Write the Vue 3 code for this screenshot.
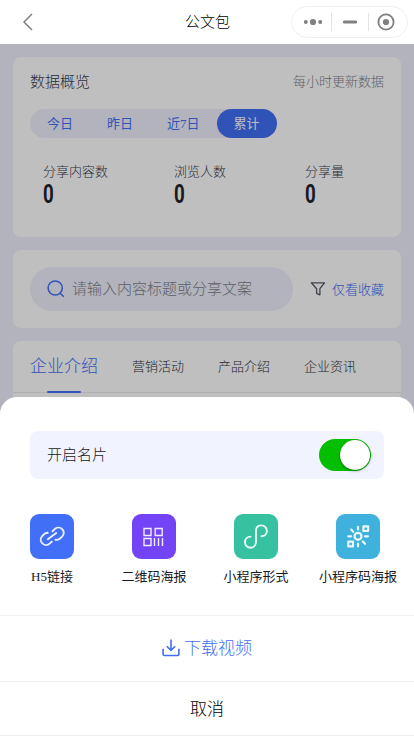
<script setup>
import { ref } from 'vue'

const periods = ['今日', '昨日', '近7日', '累计']
const period = ref('累计')
const stats = [
  { label: '分享内容数', value: 0 },
  { label: '浏览人数', value: 0 },
  { label: '分享量', value: 0 },
]
const tabs = ['企业介绍', '营销活动', '产品介绍', '企业资讯']
const tab = ref('企业介绍')
const card = ref(true)
const shares = [
  { id: 'link', label: 'H5链接' },
  { id: 'qr', label: '二维码海报' },
  { id: 'mini', label: '小程序形式' },
  { id: 'code', label: '小程序码海报' },
]
</script>

<template>
  <div class="screen">
    <header class="nav">
      <svg class="back" width="12" height="18" viewBox="0 0 12 18"><path d="M10 1 2 9l8 8" /></svg>
      <h1>公文包</h1>
      <div class="capsule">
        <svg width="20" height="8" viewBox="0 0 20 8"><circle cx="2.8" cy="4" r="2" /><circle cx="10" cy="4" r="3.1" /><circle cx="17.2" cy="4" r="2" /></svg>
        <i></i>
        <svg width="14" height="4" viewBox="0 0 14 4"><rect y=".6" width="14" height="2.8" rx="1.2" /></svg>
        <i></i>
        <svg width="18" height="18" viewBox="0 0 18 18"><circle cx="9" cy="9" r="7.6" class="ring" /><circle cx="9" cy="9" r="3.1" /></svg>
      </div>
    </header>

    <main class="page">
      <section class="card overview">
        <div class="head"><h2>数据概览</h2><span>每小时更新数据</span></div>
        <div class="periods">
          <button v-for="p in periods" :key="p" :class="{ on: p === period }" @click="period = p">{{ p }}</button>
        </div>
        <div class="stats">
          <div v-for="s in stats" :key="s.label">
            <p>{{ s.label }}</p>
            <strong>{{ s.value }}</strong>
          </div>
        </div>
      </section>

      <section class="card search">
        <div class="field">
          <svg width="18" height="18" viewBox="0 0 18 18"><circle cx="8.2" cy="8" r="7.1" /><path d="m13.2 13.2 3.6 3.6" /></svg>
          <span>请输入内容标题或分享文案</span>
        </div>
        <div class="filter">
          <svg width="16" height="16" viewBox="0 0 16 16"><path d="M1.3 1.8h13.2L9.9 7.7v6.1l-3.3-1.5V7.7z" /></svg>
          <span>仅看收藏</span>
        </div>
      </section>

      <section class="card listing">
        <nav class="tabs">
          <button v-for="t in tabs" :key="t" :class="{ on: t === tab }" @click="tab = t">{{ t }}</button>
        </nav>
      </section>
      <div class="mask"></div>
    </main>

    <section class="sheet">
      <div class="toggle-row">
        <span>开启名片</span>
        <button class="switch" :class="{ on: card }" aria-label="开启名片" @click="card = !card"><i></i></button>
      </div>
      <div class="shares">
        <div v-for="s in shares" :key="s.id" class="share">
          <div class="tile" :class="s.id">
            <svg v-if="s.id === 'link'" width="44" height="44" viewBox="0 0 44 44">
              <path d="M22.5 17.2 25 14.9a5.3 5.3 0 0 1 7.2.3 5.2 5.2 0 0 1-.1 7.4l-2.4 2.2a5.6 5.6 0 0 1-4.2 1M17.7 18.7a5.8 5.8 0 0 0-4.1 1.9l-1.4 1.5a5.2 5.2 0 0 0 .1 7.3 5.3 5.3 0 0 0 7.3.2l2.2-2M17.8 25.3l8.4-6.2" />
            </svg>
            <svg v-else-if="s.id === 'qr'" class="thin" width="44" height="44" viewBox="0 0 44 44">
              <path d="M12 14.5h7v7h-7zM23.2 14.5h7v7h-7zM12 24.5h7v7h-7zM22.5 24v8M26.5 24v8M30.5 24v8" />
            </svg>
            <svg v-else-if="s.id === 'mini'" width="44" height="44" viewBox="0 0 44 44">
              <path d="M27.4 22.3c3.2 0 5.5-2.2 5.5-5.2 0-3.3-2.4-5.7-5.6-5.7s-5.3 2.2-5.3 5.5v10.5c0 3.5-2.3 6.3-5.5 6.3S11 31.2 11 28.1s2.4-5.5 5.6-5.5" />
            </svg>
            <svg v-else class="bold" width="44" height="44" viewBox="0 0 44 44">
              <circle cx="22" cy="22.3" r="3.5" />
              <path d="M27.4 12.3h4.7V17h-4.7zM12.3 27.7H17v4.7h-4.7zM22 12.9v2.6M22 29.7v2.6M12.2 22.3h2.9M29 22.3h2.9M15.2 15.5l2 2.2M26.8 27.4l2.2 2.4" />
            </svg>
          </div>
          <span>{{ s.label }}</span>
        </div>
      </div>
      <button class="action download">
        <svg width="18" height="18" viewBox="0 0 18 18"><path d="M1.1 9.8v5.5c0 .8.4 1.2 1.2 1.2h13.4c.8 0 1.2-.4 1.2-1.2V9.8M9 .6v10.8M4.8 7.3 9 11.4l4.2-4.1" /></svg>
        <span>下载视频</span>
      </button>
      <button class="action cancel">取消</button>
    </section>
  </div>
</template>

<style>
body {
  margin: 0;
}
</style>

<style scoped>
.screen {
  position: relative;
  display: flex;
  flex-direction: column;
  height: 736px;
  overflow: hidden;
  box-sizing: border-box;
  background: #fff;
  font-family: "Liberation Serif", "Noto Sans CJK SC", sans-serif;
  font-weight: 300;
  color: #171a24;
}
.screen * { box-sizing: border-box; }
h1, h2, p { margin: 0; font-weight: inherit; }
button { margin: 0; padding: 0; border: 0; background: none; font: inherit; color: inherit; }
svg { display: block; flex: none; }

.nav {
  display: grid;
  grid-template-columns: 163px 45px 1fr;
  align-items: center;
  flex: none;
  height: 44px;
  padding: 0 6px 0 22px;
}
.back { fill: none; stroke: #808080; stroke-width: 1.5; }
.nav h1 { font-size: 15px; line-height: 22px; color: #000; white-space: nowrap; }
.capsule {
  display: grid;
  grid-template-columns: 39px 1px 36px 1px 34px;
  align-items: center;
  justify-items: center;
  justify-self: end;
  width: 117px;
  height: 32px;
  border: 1px solid #f0f0f0;
  border-radius: 16px;
  fill: #808080;
}
.capsule svg:first-child { margin-left: 2px; }
.capsule i { width: 1px; height: 18px; background: #e3e3e3; }
.ring { fill: none; stroke: #808080; stroke-width: 1.8; }

.page {
  position: relative;
  display: flex;
  flex-direction: column;
  gap: 13px;
  flex: 1;
  padding: 13px 13px 0;
  background: #eeeffb;
}
.mask { position: absolute; inset: 0; background: rgba(0, 0, 0, 0.25); }
.card { flex: none; border-radius: 8px; background: #fff; }
.overview { height: 180px; padding: 11px 17px; }
.head { display: flex; justify-content: space-between; align-items: center; height: 24px; font-size: 13px; color: #80838c; }
.head h2 { font-size: 15px; color: #394050; }
.periods {
  display: flex;
  width: 247px;
  height: 29px;
  margin-top: 17px;
  border-radius: 15px;
  background: #eeeffb;
  font-size: 13px;
  font-weight: 400;
  line-height: 29px;
  color: #416ff5;
}
.periods button { flex: none; padding: 0 17px; border-radius: 15px; white-space: nowrap; }
.periods .on { background: #416ff5; color: #fff; }
.stats { display: grid; grid-template-columns: repeat(3, 131px); margin: 24px 0 0 13px; font-size: 13px; }
.stats p { line-height: 20px; color: #394050; }
.stats strong {
  display: block;
  width: 14px;
  margin-top: -1px;
  font: bold 26px/26px Roboto, sans-serif;
  color: #22252d;
  transform: scaleX(0.72);
  transform-origin: 0 50%;
}

.search { display: flex; align-items: center; justify-content: space-between; height: 78px; padding: 0 17px; }
.field {
  display: flex;
  align-items: center;
  gap: 7px;
  width: 263px;
  height: 44px;
  padding-left: 17px;
  border-radius: 22px;
  background: #eeeffb;
  font-size: 15px;
  color: #808289;
}
.field span { padding-bottom: 3px; }
.field svg { fill: none; stroke: #416ff5; stroke-width: 1.5; }
.filter { display: flex; align-items: center; gap: 6px; font-size: 13px; color: #416ff5; }
.filter span { padding-bottom: 2px; }
.filter svg { fill: none; stroke: #535966; stroke-width: 1.3; stroke-linejoin: round; }

.listing { height: 200px; }
.tabs {
  display: flex;
  gap: 34px;
  height: 52px;
  padding-left: 17px;
  border-bottom: 1px solid #ebebed;
  font-size: 13px;
  color: #30343e;
}
.tabs button { height: 52px; line-height: 50px; white-space: nowrap; }
.tabs .on { display: flex; flex-direction: column; align-items: center; padding-top: 2px; font-size: 17px; line-height: 48px; color: #416ff5; }
.tabs .on::after { content: ""; flex: none; width: 34px; height: 2px; border-radius: 1px; background: #416ff5; }

.sheet {
  position: absolute;
  right: 0;
  bottom: 0;
  left: 0;
  height: 339px;
  padding-top: 34px;
  border-radius: 17px 17px 0 0;
  background: #fff;
}
.toggle-row {
  display: flex;
  align-items: center;
  justify-content: space-between;
  height: 48px;
  margin: 0 30px;
  padding: 0 13px 0 17px;
  border-radius: 8px;
  background: #f1f4fe;
  font-size: 15px;
}
.toggle-row span { padding-bottom: 3px; }
.switch { display: flex; width: 52px; height: 32px; padding: 1px; border-radius: 16px; background: #dfdfdf; }
.switch i { width: 30px; height: 30px; border-radius: 50%; background: #fff; box-shadow: 0 1px 3px rgba(0, 0, 0, 0.4); }
.switch.on { justify-content: flex-end; background: #04be02; }
.shares { display: grid; grid-template-columns: repeat(4, 102px); margin: 35px 0 0 1px; }
.share { display: flex; flex-direction: column; align-items: center; gap: 8px; font-size: 13px; font-weight: 400; line-height: 20px; white-space: nowrap; }
.tile { width: 44px; height: 45px; border-radius: 9px; }
.tile svg { fill: none; stroke: #fff; stroke-opacity: 0.9; stroke-width: 1.9; stroke-linecap: round; stroke-linejoin: round; }
.tile .thin { stroke-width: 1.4; stroke-linecap: butt; stroke-linejoin: miter; }
.tile .bold { stroke-width: 2.2; }
.link { background: #426ff7; }
.qr { background: #7244f5; }
.mini { background: #36c1a1; }
.code { background: #3eb2dc; }
.action {
  display: flex;
  align-items: center;
  justify-content: center;
  width: 100%;
  border-top: 1px solid #f2f2f3;
  font-size: 17px;
}
.download { gap: 4px; height: 66px; margin-top: 28px; padding-bottom: 1px; color: #416ff5; }
.download span { padding-bottom: 4px; }
.download svg { fill: none; stroke: #416ff5; stroke-width: 1.6; }
.cancel { height: 55px; padding-bottom: 2px; border-bottom: 1px solid #ededee; color: #000; }
</style>
